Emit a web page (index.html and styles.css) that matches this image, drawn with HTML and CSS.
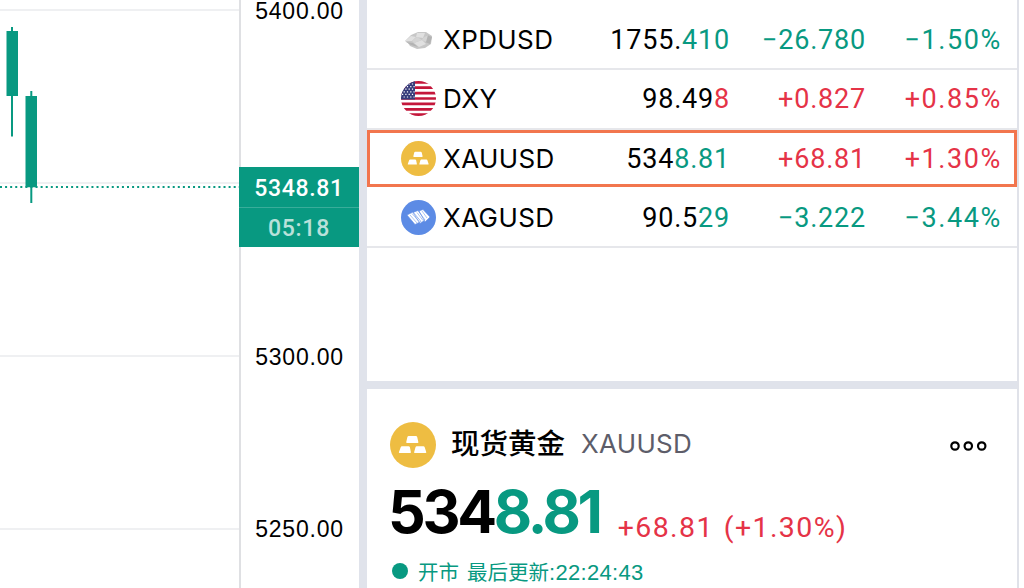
FILE: index.html
```
<!doctype html>
<html lang="zh-CN">
<head>
	<meta charset="UTF-8">
	<title>现货黄金 XAUUSD</title>
	<link rel="stylesheet" href="styles.css">
</head>
<body>
	<svg class="defs">
		<symbol id="gold" viewBox="0 0 46 46">
			<circle cx="23" cy="23" r="23" fill="#eebd42"/>
			<path fill="#fff" d="M18.700 14h7.200q1 0 1.300 1l1.200 5.200q.1.8-.8.8H17q-.9 0-.8-.8l1.200-5.200q.3-1 1.300-1zM12 24.300h6.600q1 0 1.300 1l1 5q.1.7-.8.7H9.600q-.9 0-.7-.7l1.800-5q.3-1 1.300-1zM26.800 24.300h6.600q1 0 1.300 1l1.600 5q.1.700-.8.700H24.800q-.9 0-.7-.7l1.400-5q.3-1 1.300-1z"/>
		</symbol>
	</svg>
	<div class="page">
		<div class="chart">
			<svg width="239" height="588">
				<path stroke="#eff0f2" stroke-width="2" d="M0 10h239M0 183h239M0 356h239M0 529h239"/>
				<path stroke="#089981" stroke-width="2" d="M12 27v109.500M31.300 91v112"/>
				<path fill="#089981" d="M6.500 31h11.500v65h-11.500zM25.500 96h11.500v91.300h-11.500z"/>
				<path stroke="#089981" stroke-width="2" stroke-dasharray="2 3.080" d="M0 187h239"/>
			</svg>
		</div>
		<div class="axis">
			<span class="tick t1">5400.00</span>
			<div class="now">
				<div class="now-price">5348.81</div>
				<div class="now-time">05:18</div>
			</div>
			<span class="tick t2">5300.00</span>
			<span class="tick t3">5250.00</span>
		</div>
		<div class="side">
			<ul class="list">
				<li>
					<svg class="icon" viewBox="0 0 35 35">
						<path fill="#c7c7c7" d="M4 19l6-6 7-3 8 0 6 4-1 8-6 4-8 1-7-3-2-3z"/>
						<path fill="#e0e0e0" d="M4 19l6-5 5 1-4 4zM16 11l8 0-2 5-7-1zM13 21l8-3 4 4-7 3z"/>
						<path fill="#b3b3b3" d="M26 13l5 2-2 7-5-2zM5 20l7 1 5 4-7-2z"/>
						<path fill="#d4d4d4" d="M22 16l5-3-2 7-4-2zM11 19l5-4 5 3-8 3z"/>
					</svg>
					<b>XPDUSD</b><span class="price">1755.<i class="down">410</i></span><span class="change down">−26.780</span><span class="rate down">−1.50%</span>
				</li>
				<li>
					<svg class="icon" viewBox="0 0 35 35">
						<clipPath id="round"><circle cx="17.500" cy="17.500" r="17.500"/></clipPath>
						<g clip-path="url(#round)">
							<path fill="#fff" d="M0 0h35v35H0z"/>
							<path stroke="#c4173b" stroke-width="2.700" d="M0 1.300h35M0 6.700h35M0 12.100h35M0 17.500h35M0 22.900h35M0 28.300h35M0 33.700h35"/>
							<path fill="#373c7b" d="M0 0h14v18.500H0z"/>
							<path stroke="#fff" stroke-width="1.200" stroke-dasharray="1.200 2.100" d="M1 3h12M2.600 5.600h11M1 8.200h12M2.600 10.800h11M1 13.400h12M2.600 16h11"/>
						</g>
					</svg>
					<b>DXY</b><span class="price">98.49<i class="up">8</i></span><span class="change up">+0.827</span><span class="rate up">+0.85%</span>
				</li>
				<li class="on">
					<svg class="icon"><use href="#gold"/></svg>
					<b>XAUUSD</b><span class="price">534<i class="down">8.81</i></span><span class="change up">+68.81</span><span class="rate up">+1.30%</span>
				</li>
				<li>
					<svg class="icon" viewBox="0 0 35 35">
						<circle cx="17.500" cy="17.500" r="17.500" fill="#5c8be5"/>
						<path fill="#fff" stroke="#5c8be5" stroke-width=".6" d="M18 11l4-1.500 7 7.500-5 5zM12 12.500l5-2 7 9.500-5 3.500zM6 15l6-3 8 9.500-6 3z"/>
						<path stroke="#5c8be5" stroke-width=".5" d="M9 15l7 8M11 13.500l7 8M16 12.500l6 8M21 11l5 7"/>
					</svg>
					<b>XAGUSD</b><span class="price">90.5<i class="down">29</i></span><span class="change down">−3.222</span><span class="rate down">−3.44%</span>
				</li>
			</ul>
			<div class="detail">
				<div class="head">
					<svg class="logo"><use href="#gold"/></svg>
					<h1>现货黄金</h1>
					<span class="code">XAUUSD</span>
					<svg class="more" width="38" height="12" fill="none" stroke="#000" stroke-width="2.200">
						<circle cx="6" cy="7" r="3.700"/>
						<circle cx="19.300" cy="7" r="3.700"/>
						<circle cx="32.700" cy="7" r="3.700"/>
					</svg>
				</div>
				<div class="quote">
					<span class="big">534<i class="down">8.81</i></span>
					<span class="diff up">+68.81</span><span class="diff pct up">(+1.30%)</span>
				</div>
				<div class="status down"><span class="dot"></span><span class="open">开市</span><span>最后更新<em>:22:24:43</em></span></div>
			</div>
		</div>
	</div>
</body>
</html>
```

FILE: styles.css
```
*{margin:0;padding:0;box-sizing:border-box;}
body{
	background:#fff;
	color:#000;
	font-family:Roboto,"Noto Sans CJK SC",sans-serif;
}
i,em{font-style:normal;}
.defs{display:none;}
.up{color:#e53347;}
.down{color:#089981;}
.page{
	display:flex;
	width:1019px;
	height:588px;
	overflow:hidden;
	border-right:2px solid #e0e2e9;
}
.chart{width:239px;flex:none;}
.chart svg{display:block;}

.axis{
	width:120px;
	flex:none;
	border-left:2px solid #dfe0e3;
	font-size:23px;
	line-height:30px;
	text-align:center;
	letter-spacing:.7px;
}
.tick{
	display:block;
	padding-right:1px;
	font-family:"Liberation Sans",sans-serif;
	line-height:22px;
	letter-spacing:.8px;
}
.t2{margin-top:99px;}
.t3{margin-top:150px;}
.now{
	height:80px;
	margin:145px 0 0 -2px;
	background:#089981;
	color:#fff;
}
.now-price{
	height:41px;
	line-height:43px;
	font-weight:500;
	border-bottom:1px solid #39ad9a;
}
.now-time{
	height:39px;
	line-height:41px;
	color:#b9e1da;
	font-weight:500;
}

.side{
	flex:1;
	border-left:8px solid #e0e3eb;
}
.list{
	height:389px;
	padding-top:11px;
	border-bottom:8px solid #e0e3eb;
	list-style:none;
}
.list li{
	display:grid;
	grid-template-columns:42px 145px 142px 136px 136px;
	align-items:center;
	height:59.3px;
	padding-left:34px;
	border-bottom:2px solid #e6e7eb;
	font-size:27px;
	letter-spacing:.8px;
	text-align:right;
}
.list .on{
	height:57.6px;
	margin-bottom:1.7px;
	padding-left:31px;
	border:3px solid #f2764e;
}
.list .price,.list .change,.list .rate{padding-top:1px;}
.list .rate{letter-spacing:1.6px;}
.list b{
	font-family:Inter,sans-serif;
	font-size:26px;
	font-weight:400;
	letter-spacing:.4px;
	text-align:left;
}
.icon{width:35px;height:35px;}

.detail{padding:33px 30px 0 23px;}
.head{display:flex;align-items:center;height:46px;}
.logo{width:46px;height:46px;}
.head h1{
	margin-left:15px;
	font-size:28.5px;
	font-weight:500;
	line-height:48px;
}
.code{
	margin-left:16px;
	color:#5d5d69;
	font-family:Inter,sans-serif;
	font-size:26px;
	letter-spacing:.3px;
	line-height:43px;
	height:46px;
}
.more{margin-left:auto;}
.quote{
	display:flex;
	align-items:baseline;
	height:78px;
	line-height:88px;
}
.big{
	margin-left:-2px;
	font-family:Inter,sans-serif;
	font-size:59px;
	font-weight:700;
	letter-spacing:-3.3px;
}
.diff{
	position:relative;
	top:4px;
	margin-left:18px;
	font-size:28.5px;
	letter-spacing:1.4px;
}
.pct{margin-left:10px;}
.status{
	display:flex;
	align-items:center;
	height:50px;
	font-size:20.5px;
}
.status em{
	font-family:"Liberation Sans",sans-serif;
	font-size:22px;
	letter-spacing:.3px;
}
.dot{
	width:16px;
	height:16px;
	margin:0 10px 0 2px;
	border-radius:50%;
	background:#089981;
}
.open{margin-right:8px;}
```
